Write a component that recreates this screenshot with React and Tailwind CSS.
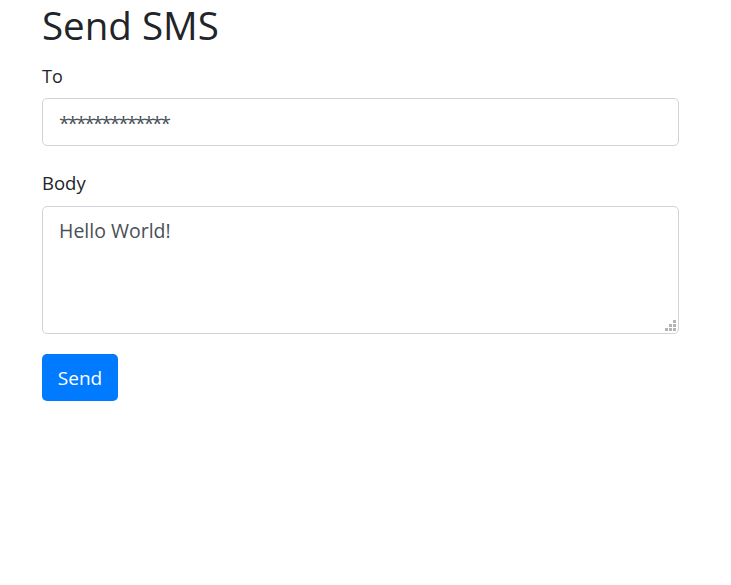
export default function App() {
  return (
    <div className="min-h-[585px] bg-white font-['Open_Sans',sans-serif] text-[#212529]">
      <div className="w-[637px] ml-[42px]">
        <h1 className="text-[38.5px] leading-[48px] font-normal pt-[1px] mb-[14px]">Send SMS</h1>
        <form onSubmit={(e) => e.preventDefault()}>
          <div className="mb-[23px]">
            <label className="block text-[18px] leading-[27px] mb-[8px]">To</label>
            <input
              type="text"
              defaultValue="*************"
              className="block w-full h-[48px] px-[16px] pt-[2px] text-[19px] tracking-[-2px] text-[#495057] border border-[#ced4da] rounded-[5px] outline-none"
            />
          </div>
          <div className="mb-[20px]">
            <label className="block text-[18.5px] leading-[27px] mb-[10px]">Body</label>
            <div className="relative">
              <textarea
                defaultValue="Hello World!"
                className="block w-full h-[128px] resize-none px-[16px] py-[10px] text-[19.5px] leading-[28px] text-[#495057] border border-[#ced4da] rounded-[5px] outline-none"
              />
              <div className="absolute right-[3px] bottom-[3px] grid grid-cols-3 gap-[1px]">
                <span className="w-[3px] h-[3px]" />
                <span className="w-[3px] h-[3px]" />
                <span className="w-[3px] h-[3px] bg-[#b4b4b4]" />
                <span className="w-[3px] h-[3px]" />
                <span className="w-[3px] h-[3px] bg-[#b4b4b4]" />
                <span className="w-[3px] h-[3px] bg-[#b4b4b4]" />
                <span className="w-[3px] h-[3px] bg-[#b4b4b4]" />
                <span className="w-[3px] h-[3px] bg-[#b4b4b4]" />
                <span className="w-[3px] h-[3px] bg-[#b4b4b4]" />
              </div>
            </div>
          </div>
          <button
            type="submit"
            className="h-[47px] w-[76px] bg-[#007bff] text-white text-[19px] pt-[1px] rounded-[5px]"
          >
            Send
          </button>
        </form>
      </div>
    </div>
  );
}
